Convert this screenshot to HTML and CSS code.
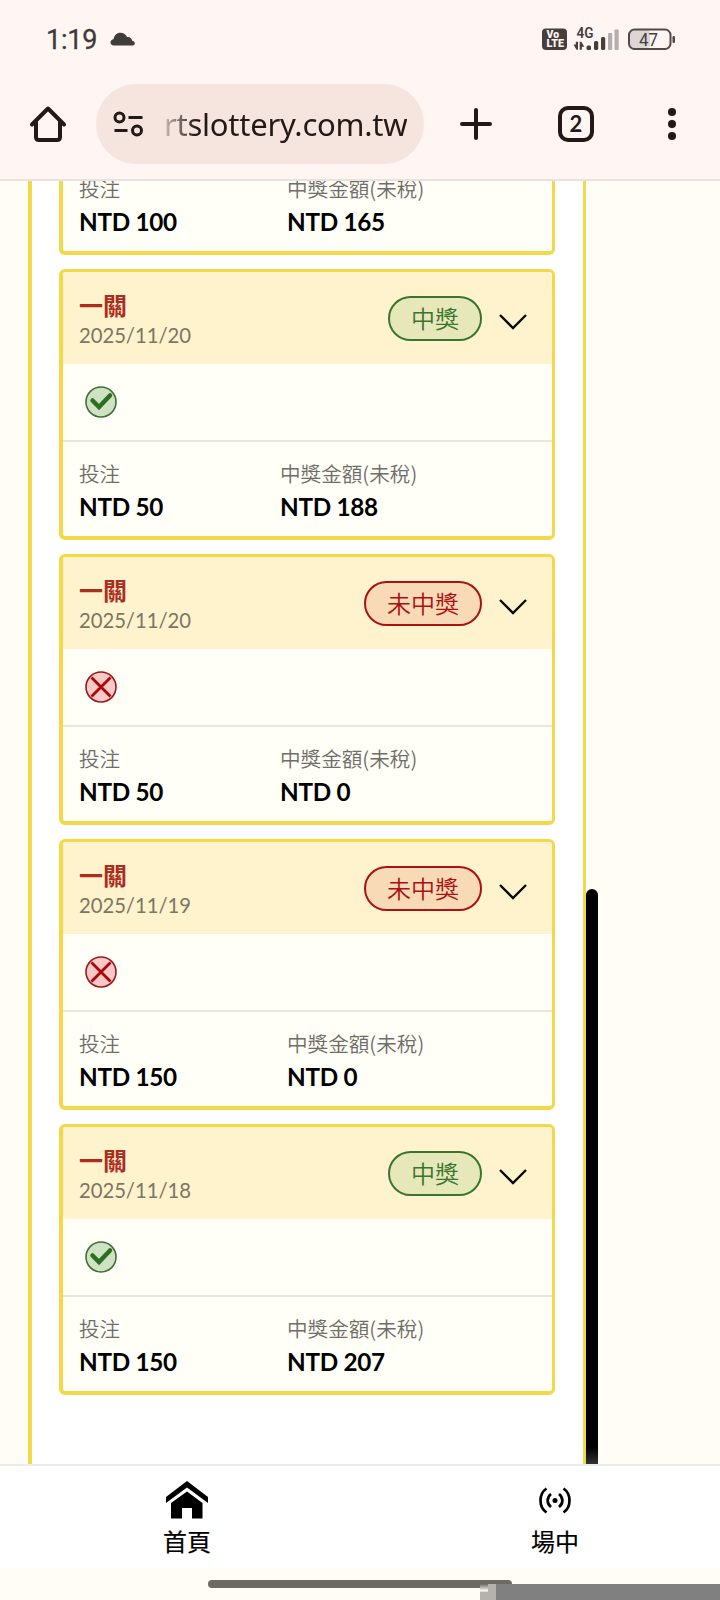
FILE: index.html
```html
<!DOCTYPE html>
<html lang="zh-Hant">
<head>
<meta charset="utf-8">
<title>投注紀錄</title>
<link rel="stylesheet" href="styles.css">
</head>
<body>
<svg class="defs" width="0" height="0">
  <symbol id="win" viewBox="0 0 32 32"><circle cx="16" cy="16" r="15" fill="#cfe3c4" stroke="#3c7038" stroke-width="1.6"/><path d="M7.500 14.500 14 21 25 9.500" fill="none" stroke="#2b7020" stroke-width="4.500" stroke-linecap="round"/></symbol>
  <symbol id="lose" viewBox="0 0 32 32"><circle cx="16" cy="16" r="15" fill="#f8c9c6" stroke="#98191b" stroke-width="1.6"/><path d="M6.500 6.500 25.500 25.500M25.500 6.500 6.500 25.500" fill="none" stroke="#b00508" stroke-width="2.800"/></symbol>
  <symbol id="chev" viewBox="0 0 28 18"><path d="M1 2 14 15 27 2" fill="none" stroke="#0a0a05" stroke-width="2.400"/></symbol>
</svg>
<div class="screen">
  <header class="chrome">
    <div class="status">
      <span class="clock">1:19</span>
      <svg class="cloud" width="26" height="14" viewBox="0 0 26 14"><path d="M4 13.500C1.500 13.500.5 12 .5 10.500.5 8.500 2 7.500 3.500 7.300 4 3.500 7 .8 10.500.8c3 0 5.500 1.700 6.500 4.200 3-.5 5 1.500 5.200 3.800 1.800.2 2.600 1.500 2.600 2.700 0 1.200-.9 2-2.200 2z" fill="#413b3a"/></svg>
      <svg class="signals" width="136" height="26" viewBox="0 0 136 26">
        <rect x="0" y="1.500" width="25" height="21.500" rx="4" fill="#443e3d"/>
        <text x="4.500" y="11" font-size="10" font-weight="900" fill="#fff4f2" textLength="12.500" lengthAdjust="spacingAndGlyphs">Vo</text>
        <text x="4.500" y="20" font-size="10" font-weight="900" fill="#fff4f2" textLength="17.500" lengthAdjust="spacingAndGlyphs">LTE</text>
        <text x="34.500" y="10.500" font-size="14.500" font-weight="600" fill="#443e3d" textLength="17" lengthAdjust="spacingAndGlyphs">4G</text>
        <g fill="#443e3d"><path d="M31.500 17.500h2.300v-2.800h2.200v8h-1.500zM37.700 14.700h1.600l3 5h-2.400v3h-2.200z"/><rect x="44.500" y="18.500" width="4.500" height="4.500" rx="1.500"/><rect x="52" y="14" width="4.200" height="9" rx="1.500"/><rect x="59" y="10" width="4.200" height="13" rx="1.500"/></g>
        <g fill="#b5aeae"><rect x="66" y="6" width="4.200" height="17" rx="1"/><rect x="72.500" y="2.500" width="4.200" height="20.500" rx="1"/></g>
        <rect x="88" y="3" width="20" height="18" rx="4" fill="#ddd6d4"/>
        <rect x="87" y="2.500" width="41.500" height="19.500" rx="5.500" fill="none" stroke="#514a49" stroke-width="2"/>
        <rect x="130.500" y="9" width="2.500" height="7" rx="1.200" fill="#514a49"/>
        <text x="97" y="18.800" font-size="18.500" fill="#443e3d" textLength="19" lengthAdjust="spacingAndGlyphs">47</text>
      </svg>
    </div>
    <div class="toolbar">
      <svg class="home" width="36" height="36" viewBox="0 0 36 36"><path d="M2 18.500 18 2.500 34 18.500M6 15v16q0 3 3 3h18q3 0 3-3V15" fill="none" stroke="#231917" stroke-width="4" stroke-linecap="round" stroke-linejoin="round"/></svg>
      <div class="address">
        <svg width="32" height="26" viewBox="0 0 32 26" fill="none" stroke="#231917" stroke-width="3"><circle cx="7.500" cy="6.500" r="4.500"/><path d="M16.500 6.500h14M2.500 19.500h13"/><circle cx="25" cy="19.500" r="4.500"/></svg>
        <span class="url">rtslottery.com.tw</span>
      </div>
      <svg class="plus" width="32" height="32" viewBox="0 0 32 32"><path d="M16 2v28M2 16h28" stroke="#231917" stroke-width="4" stroke-linecap="round"/></svg>
      <span class="tabs">2</span>
      <svg class="more" width="8" height="32" viewBox="0 0 8 32" fill="#231917"><circle cx="4" cy="4" r="4"/><circle cx="4" cy="16" r="4"/><circle cx="4" cy="28" r="4"/></svg>
    </div>
  </header>

  <main class="content">
    <section class="panel">
      <article class="card card-cut">
        <div class="amounts"><div><p class="label">投注</p><p class="value">NTD 100</p></div><div><p class="label">中獎金額(未稅)</p><p class="value">NTD 165</p></div></div>
      </article>
      <article class="card">
        <div class="head"><div><h2>一關</h2><p class="date">2025/11/20</p></div><span class="badge won">中獎</span><svg class="chev"><use href="#chev"/></svg></div>
        <div class="result"><svg><use href="#win"/></svg></div>
        <div class="amounts short"><div><p class="label">投注</p><p class="value">NTD 50</p></div><div><p class="label">中獎金額(未稅)</p><p class="value">NTD 188</p></div></div>
      </article>
      <article class="card">
        <div class="head"><div><h2>一關</h2><p class="date">2025/11/20</p></div><span class="badge lost">未中獎</span><svg class="chev"><use href="#chev"/></svg></div>
        <div class="result"><svg><use href="#lose"/></svg></div>
        <div class="amounts short"><div><p class="label">投注</p><p class="value">NTD 50</p></div><div><p class="label">中獎金額(未稅)</p><p class="value">NTD 0</p></div></div>
      </article>
      <article class="card">
        <div class="head"><div><h2>一關</h2><p class="date">2025/11/19</p></div><span class="badge lost">未中獎</span><svg class="chev"><use href="#chev"/></svg></div>
        <div class="result"><svg><use href="#lose"/></svg></div>
        <div class="amounts"><div><p class="label">投注</p><p class="value">NTD 150</p></div><div><p class="label">中獎金額(未稅)</p><p class="value">NTD 0</p></div></div>
      </article>
      <article class="card">
        <div class="head"><div><h2>一關</h2><p class="date">2025/11/18</p></div><span class="badge won">中獎</span><svg class="chev"><use href="#chev"/></svg></div>
        <div class="result"><svg><use href="#win"/></svg></div>
        <div class="amounts"><div><p class="label">投注</p><p class="value">NTD 150</p></div><div><p class="label">中獎金額(未稅)</p><p class="value">NTD 207</p></div></div>
      </article>
    </section>
    <div class="scrollbar"></div>
  </main>

  <nav class="nav">
    <a class="item"><svg width="42" height="38" viewBox="0 0 42 38"><path d="M21 0 42 16v6L21 6.500 0 22v-6zM21 10.500 36.500 22v15.500H26V27H16v10.500H5V22z"/></svg><span>首頁</span></a>
    <a class="item"><svg width="42" height="38" viewBox="0 0 42 38" fill="none" stroke="#000" stroke-width="2.700"><path d="M12.500 7.500C4.500 13 4.500 26 12.500 31.500M17 13c-4.500 3.500-4.500 9.500 0 13M25 13c4.500 3.500 4.500 9.500 0 13M29.500 7.500c8 5.500 8 18.500 0 24"/><circle cx="21" cy="19.500" r="2.500" fill="#000" stroke="none"/></svg><span>場中</span></a>
  </nav>
  <footer class="gesture"><div class="handle"></div><div class="artifact"></div></footer>
</div>
</body>
</html>
```

FILE: styles.css
```css
* { box-sizing: border-box; }
body, h2, p { margin: 0; }
body { font-family: Lato, "Noto Sans CJK TC", sans-serif; background: #fffdf6; }
.defs { position: absolute; }
.screen { width: 720px; height: 1600px; overflow: hidden; display: flex; flex-direction: column; }
svg { flex: none; display: block; }

.chrome { height: 181px; flex: none; background: #fff5f3; border-bottom: 2px solid #ece0df; }
.status { height: 80px; display: flex; align-items: center; padding: 0 43px 0 45px; font-family: Roboto, sans-serif; }
.clock { font-size: 27px; line-height: 32px; font-weight: 400; color: #3f3938; width: 65px; padding-left: 1px; letter-spacing: -.2px; -webkit-text-stroke: .3px #3f3938; }
.cloud { margin-top: -3px; }
.signals { margin-left: auto; margin-right: -1px; }
.toolbar { display: flex; align-items: center; height: 80px; margin-top: 4px; padding-left: 30px; }
.address { width: 328px; height: 80px; margin-left: 30px; border-radius: 40px; background: #f6e4df; display: flex; align-items: center; padding-left: 16px; }
.url { margin-left: 20px; font: 400 31px/40px "Noto Sans", sans-serif; letter-spacing: -.25px; color: transparent; background: linear-gradient(90deg, #cbbab6 0, #231917 32px); -webkit-background-clip: text; background-clip: text; white-space: nowrap; }
.plus { margin-left: 36px; }
.tabs { width: 36px; height: 36px; margin-left: 66px; border: 4px solid #231917; border-radius: 10px; text-align: center; font: 700 22px/28px Lato, sans-serif; color: #231917; }
.more { margin-left: 74px; }

.content { height: 1283px; flex: none; overflow: hidden; display: flex; padding-left: 28px; }
.panel { width: 558px; background: #fff; border: solid #f3d847; border-width: 0 3px 0 4px; padding: 0 28px 0 27px; display: flex; flex-direction: column; gap: 14px; }
.card { height: 271px; flex: none; border: solid #f3d847; border-width: 3px 3px 4px 4px; border-radius: 6px; background: #fffef7; overflow: hidden; }
.card-cut { height: 74px; border-top: 0; border-radius: 0 0 6px 6px; display: flex; flex-direction: column; justify-content: flex-end; }
.head { height: 92px; background: #fff3ce; display: flex; align-items: center; padding: 2px 25px 0 16px; }
.head h2 { font: 700 24px/30px "Noto Sans CJK TC", sans-serif; color: #ad2c20; }
.date { font-size: 20.300px; line-height: 29px; letter-spacing: -.05px; color: #7d7664; padding-top: 1px; margin-bottom: -1px; }
.badge { height: 45px; margin-left: auto; margin-top: -1px; padding: 0 21px; border: 2px solid; border-radius: 23px; font: 350 24px/40px "Noto Sans CJK TC", sans-serif; }
.won { color: #39752d; background: #e7e8b9; }
.lost { color: #aa1113; background: #f9dab7; }
.chev { width: 28px; height: 18px; margin: 5px 0 0 17px; }
.result { height: 78px; border-bottom: 2px solid #e9e5e0; display: flex; align-items: center; padding-left: 22px; }
.result svg { width: 32px; height: 32px; }
.amounts { height: 94px; flex: none; padding: 16px 0 0 16px; display: grid; grid-template-columns: 208px auto; }
.short { grid-template-columns: 201px auto; }
.label { font: 350 20.600px/30px "Noto Sans CJK TC", sans-serif; color: #6f6d68; }
.value { padding-top: 2px; font-size: 24.300px; line-height: 34px; font-weight: 700; letter-spacing: -.3px; color: #000; }
.label, .value { white-space: nowrap; }
.scrollbar { width: 12px; height: 575px; margin-top: 708px; border-radius: 6px 6px 0 0; background: linear-gradient(#000 97%, #333 100%); }

.nav { height: 104px; flex: none; background: #fff; border-top: 2px solid #ebebeb; display: flex; padding-left: 3px; overflow: hidden; }
.item { width: 368px; flex: none; display: flex; flex-direction: column; align-items: center; padding-top: 15px; font: 400 24px/34px "Noto Sans CJK TC", sans-serif; color: #000; -webkit-text-stroke: .2px #000; }
.item span { margin-top: 5px; }
.gesture { height: 32px; flex: none; position: relative; background: #fffdf6; padding: 12px 0 0 208px; }
.handle { width: 304px; height: 8px; border-radius: 4px; background: #6b6a65; }
.artifact { position: absolute; left: 480px; top: 16px; width: 240px; height: 16px; background: linear-gradient(#6b6a65, #fff 7px, #b5b1ad 8px) 0 0 / 8px 16px no-repeat, linear-gradient(90deg, #b5b1ad 16px, #808080 16px); }
```
